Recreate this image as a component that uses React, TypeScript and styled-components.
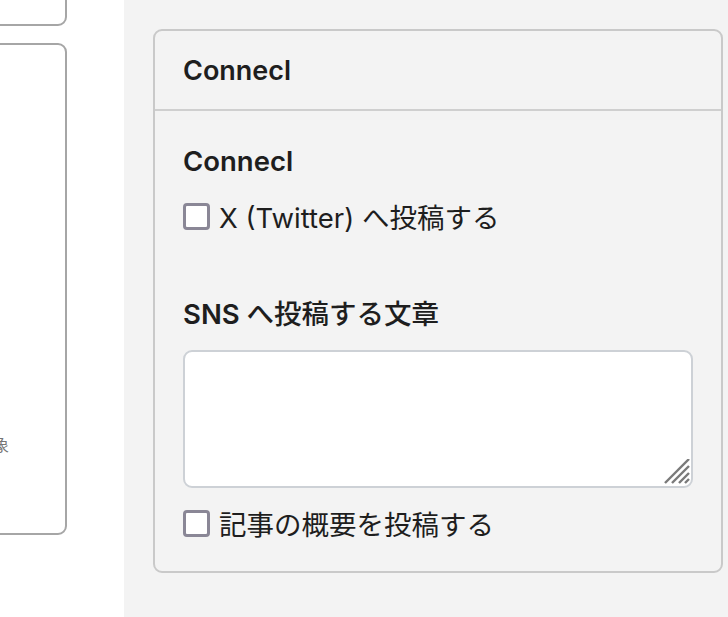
import React from "react";
import styled, { createGlobalStyle } from "styled-components";

const Global = createGlobalStyle`
  html, body { margin: 0; padding: 0; }
  body {
    font-family: Inter, "Noto Sans CJK JP", sans-serif;
    color: #1e1e1e;
    background: #f3f3f3;
  }
  * { box-sizing: border-box; }
`;

const Page = styled.div`
  display: flex;
  width: 728px;
  height: 617px;
  overflow: hidden;
`;

const LeftPane = styled.div`
  width: 124px;
  flex-shrink: 0;
  background: #ffffff;
  display: flex;
  flex-direction: column;
  align-items: flex-end;
  padding-right: 57px;
  overflow: hidden;
`;

const LeftCard = styled.div<{ $h: number; $mt: number }>`
  flex-shrink: 0;
  width: 200px;
  height: ${(p) => p.$h}px;
  margin-top: ${(p) => p.$mt}px;
  border: 2px solid #a6a6a6;
  border-radius: 9px;
`;

const Note = styled.div`
  padding: 390px 56px 0 0;
  text-align: right;
  font-size: 16px;
  line-height: 20px;
  color: #757575;
`;

const Sidebar = styled.div`
  flex: 1;
  background: #f3f3f3;
  padding: 29px 5px 0 29px;
`;

const Panel = styled.section`
  border: 2px solid #c9c9c9;
  border-radius: 9px;
`;

const PanelHeader = styled.div`
  height: 80px;
  border-bottom: 2px solid #cfcfcf;
  display: flex;
  align-items: center;
  padding: 0 28px;
  font-size: 27px;
  font-weight: 600;
`;

const PanelBody = styled.div`
  padding: 34px 28px 32px;
  display: flex;
  flex-direction: column;
`;

const Heading = styled.div<{ $mt?: number }>`
  font-size: 27.5px;
  line-height: 33px;
  font-weight: 600;
  margin-top: ${(p) => p.$mt ?? 0}px;
`;

const Cjk = styled.span`
  font-weight: 500;
`;

const CheckRow = styled.label<{ $mt: number }>`
  display: flex;
  align-items: center;
  gap: 9px;
  height: 32px;
  margin-top: ${(p) => p.$mt}px;
  font-size: 27.5px;
  color: #1e1e1e;
`;

const Box = styled.input`
  appearance: none;
  margin: 0;
  width: 27px;
  height: 27px;
  border: 3.5px solid #8a8796;
  border-radius: 4px;
  background: #ffffff;
  flex-shrink: 0;
`;

const AreaWrap = styled.div`
  position: relative;
  margin-top: 19px;
  height: 138px;
`;

const Area = styled.textarea`
  display: block;
  width: 100%;
  height: 100%;
  border: 2px solid #cdd1d6;
  border-radius: 9px;
  background: #ffffff;
  resize: none;
  outline: none;
  font: inherit;
`;

const Grip = styled.svg`
  position: absolute;
  right: 3px;
  bottom: 3px;
  width: 26px;
  height: 26px;
`;

export default function App() {
  return (
    <>
      <Global />
      <Page>
        <LeftPane>
          <LeftCard $h={100} $mt={-74} />
          <LeftCard $h={492} $mt={17}>
            <Note>対象</Note>
          </LeftCard>
        </LeftPane>
        <Sidebar>
          <Panel>
            <PanelHeader>Connecl</PanelHeader>
            <PanelBody>
              <Heading>Connecl</Heading>
              <CheckRow $mt={22}>
                <Box type="checkbox" />
                X (Twitter) へ投稿する
              </CheckRow>
              <Heading $mt={66}>
                SNS <Cjk>へ投稿する文章</Cjk>
              </Heading>
              <AreaWrap>
                <Area />
                <Grip viewBox="0 0 26 26">
                  <g stroke="#7a7a7a" strokeWidth="2.4" strokeLinecap="butt">
                    <line x1="1" y1="24" x2="25" y2="0" />
                    <line x1="8" y1="24" x2="25" y2="7" />
                    <line x1="15" y1="24" x2="25" y2="14" />
                    <line x1="21" y1="24" x2="25" y2="20" />
                  </g>
                </Grip>
              </AreaWrap>
              <CheckRow $mt={19}>
                <Box type="checkbox" />
                記事の概要を投稿する
              </CheckRow>
            </PanelBody>
          </Panel>
        </Sidebar>
      </Page>
    </>
  );
}
